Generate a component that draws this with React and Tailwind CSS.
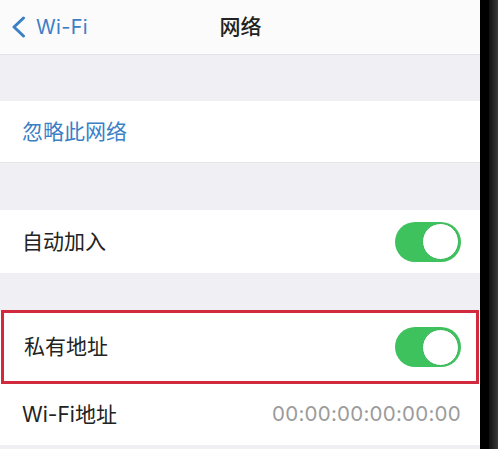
const FONT = {
  fontFamily: 'Inter, "Noto Sans CJK SC", "Noto Sans", sans-serif',
};

function Toggle() {
  return (
    <div className="w-[66px] h-[40px] rounded-full bg-[#3ec25e] flex items-center justify-end pr-[2px] shrink-0">
      <div className="w-[37px] h-[37px] rounded-full bg-white border border-[#35b455]" />
    </div>
  );
}

export default function App() {
  return (
    <div className="w-[498px] h-[449px] flex overflow-hidden bg-[#efeff4]" style={FONT}>
      <div className="w-[480px] flex flex-col">
        {/* Nav bar */}
        <div className="h-[55px] shrink-0 bg-[#fbfbfb] border-b border-[#e2e2e6] flex items-center relative">
          <div className="flex items-center pl-[11px] gap-[10px] text-[#3b80c6]">
            <svg width="15" height="22" viewBox="0 0 15 22" fill="none">
              <path
                d="M12.5 2 L3 11 L12.5 20"
                stroke="currentColor"
                strokeWidth="3"
                strokeLinecap="round"
                strokeLinejoin="round"
              />
            </svg>
            <span className="text-[20px] leading-none tracking-[0.3px]">Wi-Fi</span>
          </div>
          <span className="absolute left-0 right-0 text-center text-[21px] font-medium text-[#222] pl-[1px]">
            网络
          </span>
        </div>

        <div className="h-[46px] shrink-0 bg-[#efeff4]" />

        {/* Forget network */}
        <div className="h-[62px] shrink-0 bg-white flex items-center pl-[22px] border-b border-[#e6e6ea]">
          <span className="text-[21px] text-[#3b80c6]">忽略此网络</span>
        </div>

        <div className="h-[47px] shrink-0 bg-[#efeff4]" />

        {/* Auto join */}
        <div className="h-[63px] shrink-0 bg-white flex items-center justify-between pl-[22px] pr-[19px]">
          <span className="text-[21px] text-[#222]">自动加入</span>
          <Toggle />
        </div>

        <div className="h-[37px] shrink-0 bg-[#efeff4]" />

        {/* Private address (highlighted) */}
        <div className="h-[74px] shrink-0 bg-white">
          <div className="h-full w-[478px] ml-[1px] border-[3px] border-[#d22a3d] flex items-center justify-between pl-[20px] pr-[15px]">
            <span className="text-[21px] text-[#222]">私有地址</span>
            <Toggle />
          </div>
        </div>

        {/* Wi-Fi address */}
        <div className="h-[61px] shrink-0 bg-white flex items-center justify-between pl-[22px] pr-[19px]">
          <span className="text-[21px] text-[#222]">Wi-Fi地址</span>
          <span className="text-[20.5px] text-[#9b9b9b] tracking-[0.25px]">00:00:00:00:00:00</span>
        </div>

        <div className="flex-1 bg-[#efeff4]" />
      </div>

      {/* Device bezel edge */}
      <div className="flex-1 flex">
        <div className="w-[9px] bg-black" />
        <div className="flex-1 bg-gradient-to-r from-[#111] to-[#3a3a3a]" />
      </div>
    </div>
  );
}
